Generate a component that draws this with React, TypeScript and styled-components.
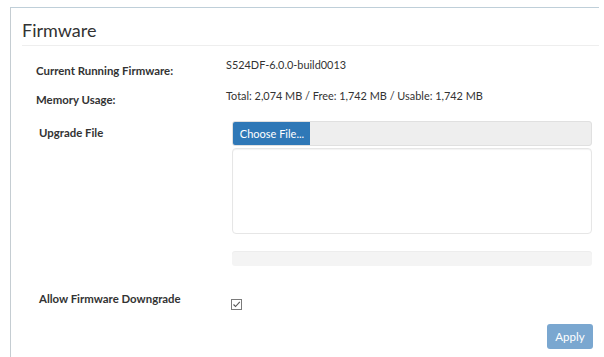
import React from "react";
import styled, { createGlobalStyle } from "styled-components";

const Global = createGlobalStyle`
  html, body { margin: 0; padding: 0; background: #ffffff; }
  body { font-family: Lato, "Open Sans", "Liberation Sans", sans-serif; color: #333333; }
  * { box-sizing: border-box; }
`;

const Panel = styled.section`
  margin: 7px 0 0 10px;
  width: 589px;
  height: 350px;
  border-top: 1px solid #bfcfd9;
  border-left: 1px solid #c5cdd2;
  background: #fff;
  display: flex;
  flex-direction: column;
`;

const Header = styled.h2`
  margin: 0 0 0 11px;
  padding: 11px 0 4px 0;
  font-size: 18px;
  line-height: 22px;
  font-weight: 400;
  color: #333;
  border-bottom: 1px solid #eeeeee;
`;

const Body = styled.div`
  display: flex;
  flex-direction: column;
  padding: 12px 0 0 25px;
`;

const Row = styled.div<{ $h: number }>`
  display: grid;
  grid-template-columns: 190px 1fr;
  height: ${(p) => p.$h}px;
  align-items: start;
`;

const Label = styled.div<{ $top: number; $indent?: number }>`
  font-size: 11.4px;
  line-height: 14px;
  font-weight: 700;
  color: #333;
  padding-top: ${(p) => p.$top}px;
  padding-left: ${(p) => p.$indent ?? 0}px;
`;

const Value = styled.div`
  font-size: 10.9px;
  line-height: 14px;
  color: #333;
`;

const UploadCol = styled.div`
  display: flex;
  flex-direction: column;
  padding-left: 6px;
  width: 366px;
`;

const FileInput = styled.div`
  display: flex;
  height: 25px;
  background: #eeeeee;
  border: 1px solid #e0e0e0;
  border-radius: 3px;
  overflow: hidden;
`;

const ChooseButton = styled.button`
  width: 78px;
  margin: -1px 0 0 -1px;
  height: 25px;
  border: none;
  border-radius: 3px 0 0 3px;
  background: #2f78b7;
  color: #fff;
  font-family: inherit;
  font-size: 11px;
  padding: 0 0 0 2px;
  text-align: center;
`;

const DropArea = styled.div`
  margin-top: 2px;
  height: 86px;
  border: 1px solid #e6e6e6;
  border-radius: 4px;
  box-shadow: inset 0 1px 1px rgba(0, 0, 0, 0.05);
  background: #fff;
`;

const Progress = styled.div`
  margin-top: 17px;
  height: 15px;
  background: #f4f4f4;
  border-radius: 3px;
  box-shadow: inset 0 1px 1px rgba(0, 0, 0, 0.03);
`;

const CheckCell = styled.div`
  padding: 10px 0 0 5px;
  display: flex;
`;

const Footer = styled.div`
  display: flex;
  justify-content: flex-end;
  padding: 0 6px 0 0;
`;

const ApplyButton = styled.button`
  width: 46px;
  height: 25px;
  border: none;
  border-radius: 3px;
  background: #7aa7d0;
  color: #fff;
  font-family: inherit;
  font-size: 11.5px;
  padding: 0;
`;

const CheckIcon = () => (
  <svg width="11" height="11" viewBox="0 0 11 11">
    <rect x="0.5" y="0.5" width="10" height="10" fill="#fff" stroke="#7a7a7a" />
    <path d="M2.5 5.5 L4.5 7.5 L8.8 2.8" fill="none" stroke="#555" strokeWidth="1.1" />
  </svg>
);

export default function App() {
  return (
    <>
      <Global />
      <Panel>
        <Header>Firmware</Header>
        <Body>
          <Row $h={31}>
            <Label $top={6}>Current Running Firmware:</Label>
            <Value>S524DF-6.0.0-build0013</Value>
          </Row>
          <Row $h={32}>
            <Label $top={4}>Memory Usage:</Label>
            <Value>Total: 2,074 MB / Free: 1,742 MB / Usable: 1,742 MB</Value>
          </Row>
          <Row $h={168}>
            <Label $top={5} $indent={3}>Upgrade File</Label>
            <UploadCol>
              <FileInput>
                <ChooseButton>Choose File...</ChooseButton>
              </FileInput>
              <DropArea />
              <Progress />
            </UploadCol>
          </Row>
          <Row $h={35}>
            <Label $top={3} $indent={3}>Allow Firmware Downgrade</Label>
            <CheckCell>
              <CheckIcon />
            </CheckCell>
          </Row>
        </Body>
        <Footer>
          <ApplyButton>Apply</ApplyButton>
        </Footer>
      </Panel>
    </>
  );
}
